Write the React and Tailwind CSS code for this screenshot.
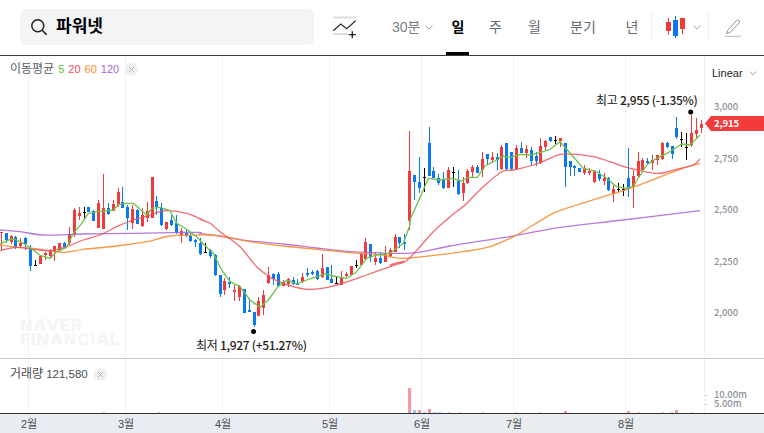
import React from "react";

const z3 = [
["R",185,190,185,240],["B",190,210,188,220],["R",198,215,195,222],["B",200,235,198,238],["R",218,228,205,235],["B",205,222,200,240],["B",233,288,225,302],["K",285,285,270,287],["R",258,282,258,282],["R",248,255,246,270],["R",242,258,238,268],["R",229,245,229,272],["R",220,240,218,245],["B",218,232,215,235],["R",192,220,172,225],["R",120,195,115,200],["R",129,137,112,150],["K",127,127,112,143],["B",112,125,112,125],["B",123,152,120,152],["R",98,175,90,175],["R",115,176,12,176],["B",115,133,100,135],["R",102,122,90,122],["R",67,105,55,112],["B",97,113,52,113],["B",112,145,105,180],["R",117,160,105,178],["B",120,162,118,162],["R",135,167,115,170],["R",123,143,97,155],["R",22,143,22,143],["B",93,112,78,135],["B",114,165,100,168],["R",155,177,155,180],["B",150,165,135,168],["B",160,190,135,192],["R",183,195,175,218],["B",188,198,180,200],["B",197,213,190,215],["B",210,215,208,232],["B",218,252,205,254],["K",245,245,220,250],["B",240,258,238,265],["B",255,315,252,318],["B",316,372,316,380],["R",333,360,325,375],["B",336,342,322,355],["R",360,365,345,392],["R",347,380,345,392],["B",357,428,357,428],["B",420,425,385,425],["B",427,465,425,470],["R",393,437,380,437],
];
const z8 = [
["R",405,445,390,465],["R",345,370,322,372],["B",342,358,338,375],["B",342,378,335,380],["R",365,378,360,378],["R",358,372,355,380],["B",360,372,352,375],["B",368,375,358,375],["R",352,365,340,368],["B",338,345,325,352],["B",335,342,330,345],["B",333,357,330,360],["R",323,352,282,355],["B",322,360,322,360],["B",358,368,315,370],["K",368,368,348,372],["R",352,375,333,375],["R",342,348,337,350],["R",318,345,318,345],["K",316,316,300,323],["R",282,316,278,318],["R",247,298,235,300],["B",252,290,252,305],["R",293,305,275,315],["B",293,310,275,312],["R",280,305,258,305],["R",270,288,265,295],["R",232,275,222,275],["B",232,248,232,265],["B",247,252,222,270],
];
const z4 = [
["R",243,393,122,420],["B",255,275,255,330],["B",277,295,200,310],["K",262,262,235,305],["B",158,258,110,258],["B",243,263,230,265],["B",265,278,252,285],["B",270,295,245,297],["R",240,293,230,293],["K",245,245,230,290],["B",272,312,240,315],["R",280,310,262,332],["R",243,280,238,282],["R",230,245,225,260],["B",232,248,225,250],["R",208,240,185,260],["B",192,208,192,225],["R",202,210,185,220],["B",202,210,188,240],["R",172,238,165,240],["B",160,238,160,240],["B",185,238,185,240],["R",175,238,165,240],["B",175,188,155,190],["R",178,190,165,205],["B",180,212,172,225],["B",198,212,185,228],["R",168,218,145,222],["R",153,170,150,180],["B",142,152,140,155],["K",150,150,138,162],["R",145,152,145,170],["B",158,230,158,290],["B",213,230,213,258],["B",228,235,225,258],["B",235,245,235,245],["R",235,250,225,255],["R",242,248,235,255],["R",242,275,240,278],["B",252,268,240,272],["R",263,272,250,285],["B",265,300,262,303],["R",297,312,285,335],["K",297,297,278,305],["K",298,298,282,318],["B",265,295,175,320],["R",258,290,240,353],["R",212,258,185,260],["R",210,240,205,240],["B",213,220,205,225],["R",210,220,195,240],["R",195,210,195,225],["R",160,208,155,210],["B",160,172,155,175],["B",168,192,168,208],["B",115,140,82,148],["K",148,148,127,172],["K",172,172,130,210],["R",130,165,75,170],["R",120,132,85,145],["R",102,113,90,128],
];
const conv = (rows, off) => rows.map(([c, a, b, d, e]) => [c, off + a / 3, off + b / 3, off + d / 3, off + e / 3]);
const candles = [...conv(z3, 170), ...conv(z8, 160), ...conv(z4, 90)];

const pts = (rows, ox, oy) => rows.map(([x, y]) => [ox + x / 3, oy + y / 3]);
const green = [
  ...pts([[0,222],[30,208],[45,208],[70,220],[92,235],[120,256],[150,265],[170,245],[200,232],[220,190],[245,160],[265,130],[300,124],[340,120],[357,103],[380,100],[400,100],[420,118],[440,135],[455,115],[480,112],[510,122],[530,160],[560,178],[590,200],[610,222],[640,250],[665,300],[690,335],[720,350],[750,390],[780,412]], 0, 170),
  ...pts([[205,420],[230,385],[250,365],[265,362],[290,372],[320,360],[350,350],[375,342],[400,348],[440,355],[470,335],[500,295],[530,285],[570,280],[610,250],[630,195]], 200, 160),
  ...pts([[60,390],[100,300],[115,265],[150,270],[185,265],[215,273],[235,262],[262,262],[285,228],[310,215],[340,198],[360,203],[390,193],[420,195],[450,188],[480,178],[510,155],[550,200],[580,235],[620,245],[650,265],[680,290],[710,295],[730,288],[770,225],[800,205],[840,185],[875,162],[900,165],[930,135]], 390, 90),
];
const red = [
  ...pts([[0,242],[50,232],[100,238],[150,242],[200,230],[250,210],[300,195],[350,170],[400,150],[450,135],[500,122],[560,130],[620,155]], 0, 170),
  ...pts([[0,178],[30,190],[60,215],[120,260],[170,320],[230,362],[320,388],[400,378],[500,345],[610,305]], 200, 160),
  ...pts([[0,525],[45,515],[90,470],[130,425],[190,372],[225,345],[280,290],[335,245],[370,240],[430,225],[480,205],[510,193],[560,193],[610,200],[660,215],[710,232],[800,250],[860,238],[910,225],[930,207]], 390, 90),
];
const orange = [
  ...pts([[0,225],[50,232],[100,235],[190,247],[250,238],[350,228],[440,215],[510,198],[600,195]], 0, 170),
  ...pts([[0,224],[60,228],[150,245],[250,258],[350,268],[450,278],[550,285]], 200, 160),
  ...pts([[0,500],[45,505],[160,493],[220,485],[300,470],[370,440],[430,405],[490,370],[560,345],[640,320],[720,295],[800,265],[870,238],[930,220]], 390, 90),
];
const purple = [
  ...pts([[0,180],[60,185],[130,195],[250,192],[400,190],[520,188],[600,187]], 0, 170),
  ...pts([[0,220],[60,228],[150,243],[250,252],[350,264],[450,275],[530,278]], 200, 160),
  ...pts([[0,490],[80,488],[180,468],[370,438],[510,412],[700,390],[930,362]], 390, 90),
];
const smooth = (p) => {
  let d = `M${p[0][0].toFixed(1)} ${p[0][1].toFixed(1)}`;
  for (let i = 0; i < p.length - 1; i++) {
    const a = p[Math.max(i - 1, 0)], b = p[i], c = p[i + 1], e = p[Math.min(i + 2, p.length - 1)];
    d += `C${(b[0] + (c[0] - a[0]) / 6).toFixed(1)} ${(b[1] + (c[1] - a[1]) / 6).toFixed(1)} ${(c[0] - (e[0] - b[0]) / 6).toFixed(1)} ${(c[1] - (e[1] - b[1]) / 6).toFixed(1)} ${c[0].toFixed(1)} ${c[1].toFixed(1)}`;
  }
  return d;
};
const straight = (p) => p.map((q) => q[0].toFixed(1) + "," + q[1].toFixed(1)).join(" ");

const grid = [28, 125, 222, 329, 421, 513, 625, 704];
const colors = { R: "#f13a3c", B: "#0a78ee", K: "#000000" };

const Candles = () =>
  candles.map(([c, top, bot, hi, lo], i) => {
    const x = Math.round(0.9 + 4.86 * i);
    const fill = colors[c];
    if (c === "K")
      return (
        <g key={i} fill={fill}>
          <rect x={x} y={hi} width="1" height={lo - hi} />
          <rect x={x - 1} y={Math.round(top)} width="3" height="1" />
        </g>
      );
    return (
      <g key={i} fill={fill}>
        <rect x={x} y={hi} width="1" height={lo - hi} />
        <rect x={x - 1} y={top} width="3.4" height={Math.max(bot - top, 1.5)} />
      </g>
    );
  });

const volumes = [
  [102,412,"R",0.55],[157,412,"R",0.55],[408,388,"R",1],[413,410,"B",1],[418,410.3,"R",1],[423,412,"B",0.7],[428,409,"R",1],[433,412,"B",0.7],[438,412,"B",0.7],[448,412,"R",0.55],[458,412,"R",0.55],[481,412,"R",0.55],[515,412,"R",0.55],[539,412,"R",0.55],[564,411,"R",1],[627,411,"R",1],[637,412,"R",0.55],[661,412,"R",0.55],[670,412,"R",0.55],[675,410,"R",1],[690,412,"R",0.55],
];

const Chevron = ({ className }) => (
  <svg viewBox="0 0 8 5" className={className} fill="none" stroke="#a5a9af" strokeWidth="1">
    <path d="M0.5 0.5 4 4 7.5 0.5" />
  </svg>
);

const Tab = ({ children, w, className = "" }) => (
  <div className={`flex items-center justify-center text-[14px] text-[#666b73] ${w} ${className}`}>{children}</div>
);

const CloseDot = ({ className }) => (
  <div className={`flex h-[13px] w-[13px] items-center justify-center rounded-full bg-[#f0f0f0] ${className}`}>
    <svg viewBox="0 0 7 7" className="h-[7px] w-[7px]" stroke="#b4b6ba" strokeWidth="1"><path d="M1 1l5 5M6 1L1 6" /></svg>
  </div>
);

const months = [
  ["2월", "w-[97px]"],
  ["3월", "w-[97px]"],
  ["4월", "w-[107px]"],
  ["5월", "w-[92px]"],
  ["6월", "w-[92px]"],
  ["7월", "w-[112px]"],
  ["8월", "w-[30px]"],
];

const cjk = "font-['Noto_Sans_CJK_KR','Noto_Sans',sans-serif]";

export default function App() {
  return (
    <div className="h-[433px] w-[764px] overflow-hidden bg-white font-['Liberation_Sans','Noto_Sans_CJK_KR',sans-serif]">
      <header className="flex h-[56px] items-center border-b border-[#3a3a3a] pb-[1px]">
        <div className="ml-5 flex h-9 w-[294px] items-center rounded-md bg-[#f3f4f6] pl-[10px]">
          <svg viewBox="0 0 18 18" className="h-[18px] w-[18px]" fill="none" stroke="#222" strokeWidth="1.5"><circle cx="7.8" cy="7.8" r="6" /><path d="M12.2 12.2 16.6 16.6" /></svg>
          <span className="ml-[8px] text-[17px] font-bold text-black">파워넷</span>
        </div>
        <svg viewBox="0 0 24 23" className="ml-[19px] h-[23px] w-6" fill="none">
          <path d="M0 1.5H23M0 18H15" stroke="#dcdde0" strokeWidth="2" />
          <path d="M0.3 14.7 7.7 8l6 4.7 9-8" stroke="#333" strokeWidth="1.3" />
          <path d="M15.8 18.7H22.8M19.3 15.2V22.2" stroke="#222" strokeWidth="1.3" />
        </svg>
        <div className="ml-[35px] flex w-[43px] items-center text-[14px] text-[#7a7f87]">
          30분<Chevron className="ml-[5px] h-[5px] w-2" />
        </div>
        <div className="relative flex h-[55px] w-[46px] items-center justify-center text-[14px] font-bold text-black">
          일
          <span className="absolute bottom-0 left-[11px] h-[3px] w-[23px] bg-black" />
        </div>
        <Tab w="w-[29px]">주</Tab>
        <Tab w="w-[49px]">월</Tab>
        <Tab w="w-[48px]">분기</Tab>
        <Tab w="w-[38px]" className="ml-[6px]">년</Tab>
        <div className="h-7 w-px bg-[#eeeff1]" />
        <svg viewBox="0 0 20 22" className="ml-[14px] h-[22px] w-5">
          <path d="M2.5 2v17" stroke="#f13a3c" /><rect x="0" y="6" width="5" height="9" fill="#f13a3c" />
          <path d="M9.5 0v22" stroke="#0a78ee" /><rect x="7" y="4" width="5" height="16" fill="#0a78ee" />
          <path d="M16.5 2v16" stroke="#f13a3c" /><rect x="14" y="2" width="5" height="11" fill="#f13a3c" />
        </svg>
        <Chevron className="ml-[7px] h-[5px] w-2" />
        <div className="ml-[7px] h-7 w-px bg-[#eeeff1]" />
        <svg viewBox="0 0 16 19" className="ml-4 h-[19px] w-4" fill="none" stroke="#8f9399" strokeWidth="1">
          <path d="M2.5 12.5 11.5 2.5a1.6 1.6 0 0 1 2.3 0l.3.3a1.6 1.6 0 0 1 0 2.2L5 14.5l-3.3 1z" />
          <path d="M0 18.3H16" stroke="#b8bbc0" />
        </svg>
      </header>

      <section className="relative h-[302px]">
        <svg viewBox="0 56 764 302" className="absolute inset-0 h-[302px] w-[764px]">
          {grid.map((x) => <rect key={x} x={x} y="56" width="1" height="302" fill="#f1f2f4" />)}
          <g shapeRendering="crispEdges"><Candles /></g>
          <path d={smooth(purple)} fill="none" stroke="#a765d8" strokeWidth="1.3" opacity="0.85" />
          <path d={smooth(orange)} fill="none" stroke="#fb8d32" strokeWidth="1.3" opacity="0.9" />
          <path d={smooth(red)} fill="none" stroke="#f0525a" strokeWidth="1.3" opacity="0.85" />
          <polyline points={straight(green)} fill="none" stroke="#6cc24a" strokeWidth="1.3" strokeLinejoin="round" />
          <circle cx="690.7" cy="112" r="2.5" fill="#000" />
          <circle cx="253.6" cy="331.5" r="2.5" fill="#000" />
        </svg>

        <div className="relative flex items-start justify-between pl-[10px] pr-[5px] pt-[6px]">
          <div className="flex items-center gap-1 text-[11px] leading-[14px] text-[#5a5d62]">
            <span className="text-[12px]">이동평균</span>
            <span className="text-[#5cc53b]">5</span>
            <span className="text-[#f0505a]">20</span>
            <span className="text-[#ff8c2e]">60</span>
            <span className="text-[#a566e0]">120</span>
            <CloseDot className="ml-[2px]" />
          </div>
          <div className="mt-[5px] flex w-[47px] items-center text-[11px] leading-[13px] text-[#222]">
            Linear<Chevron className="ml-[6px] h-[5px] w-2" />
          </div>
        </div>

        <div className="absolute left-[20px] top-[262px] font-['Inter',sans-serif] text-[16.5px] font-extrabold leading-[14px] tracking-[1px] text-[#f4f5f7]">
          NAVER<br />FINANCIAL
        </div>

        <div className={`absolute left-[596px] top-[36px] whitespace-nowrap ${cjk} text-[12px] leading-[16px] tracking-[-0.3px] text-[#222]`}>
          최고 <span className="font-medium">2,955 (-1.35%)</span>
        </div>
        <div className={`absolute left-[196px] top-[281px] whitespace-nowrap ${cjk} text-[12px] leading-[16px] tracking-[-0.3px] text-[#222]`}>
          최저 <span className="font-medium">1,927 (+51.27%)</span>
        </div>

        <div className={`absolute left-[714px] top-[45px] flex h-[216px] flex-col justify-between ${cjk} text-[9.5px] font-medium leading-[10px] tracking-[-0.1px] text-[#8d929a]`}>
          <span>3,000</span>
          <span>2,750</span>
          <span>2,500</span>
          <span>2,250</span>
          <span>2,000</span>
        </div>

        <div className={`absolute left-[705px] top-[60px] flex h-[15px] w-[59px] items-center bg-[#f23c3c] pl-[9px] ${cjk} text-[9.5px] font-bold tracking-[-0.1px] text-white [clip-path:polygon(0_50%,6px_0,100%_0,100%_100%,6px_100%)]`}>
          2,915
        </div>
      </section>

      <section className="relative h-[56px] border-y border-t-[#c5cbd0] border-b-[#333]">
        <svg viewBox="0 359 764 54" className="absolute inset-0 h-[54px] w-[764px]" shapeRendering="crispEdges">
          {grid.map((x) => <rect key={x} x={x} y="359" width="1" height="54" fill="#f1f2f4" />)}
          {volumes.map(([x, y, c, o], i) => (
            <rect key={i} x={x} y={y} width="3" height={413 - y} fill={c === "R" ? "#f59a9e" : "#9ac6f5"} opacity={o} />
          ))}
          <rect x="704" y="395" width="4" height="1" fill="#d8dade" />
          <rect x="704" y="404" width="4" height="1" fill="#d8dade" />
        </svg>
        <div className="relative flex items-center pl-[10px] pt-[8px] text-[11.5px] leading-[14px] text-[#4a4d52]">
          <span className="text-[12px]">거래량</span>
          <span className="ml-[3px]">121,580</span>
          <CloseDot className="ml-[6px]" />
        </div>
        <div className={`absolute left-[714px] top-[31px] flex flex-col ${cjk} text-[9.5px] font-medium leading-[9.4px] tracking-[-0.1px] text-[#8d929a]`}>
          <span>10.00m</span>
          <span>5.00m</span>
        </div>
      </section>

      <footer className="flex h-[19px] items-center bg-[#e9ecf1] pl-[21px] text-[11px] leading-[18px] text-[#4a4d52]">
        {months.map(([t, w]) => (
          <span key={t} className={w}>{t}</span>
        ))}
      </footer>
    </div>
  );
}
